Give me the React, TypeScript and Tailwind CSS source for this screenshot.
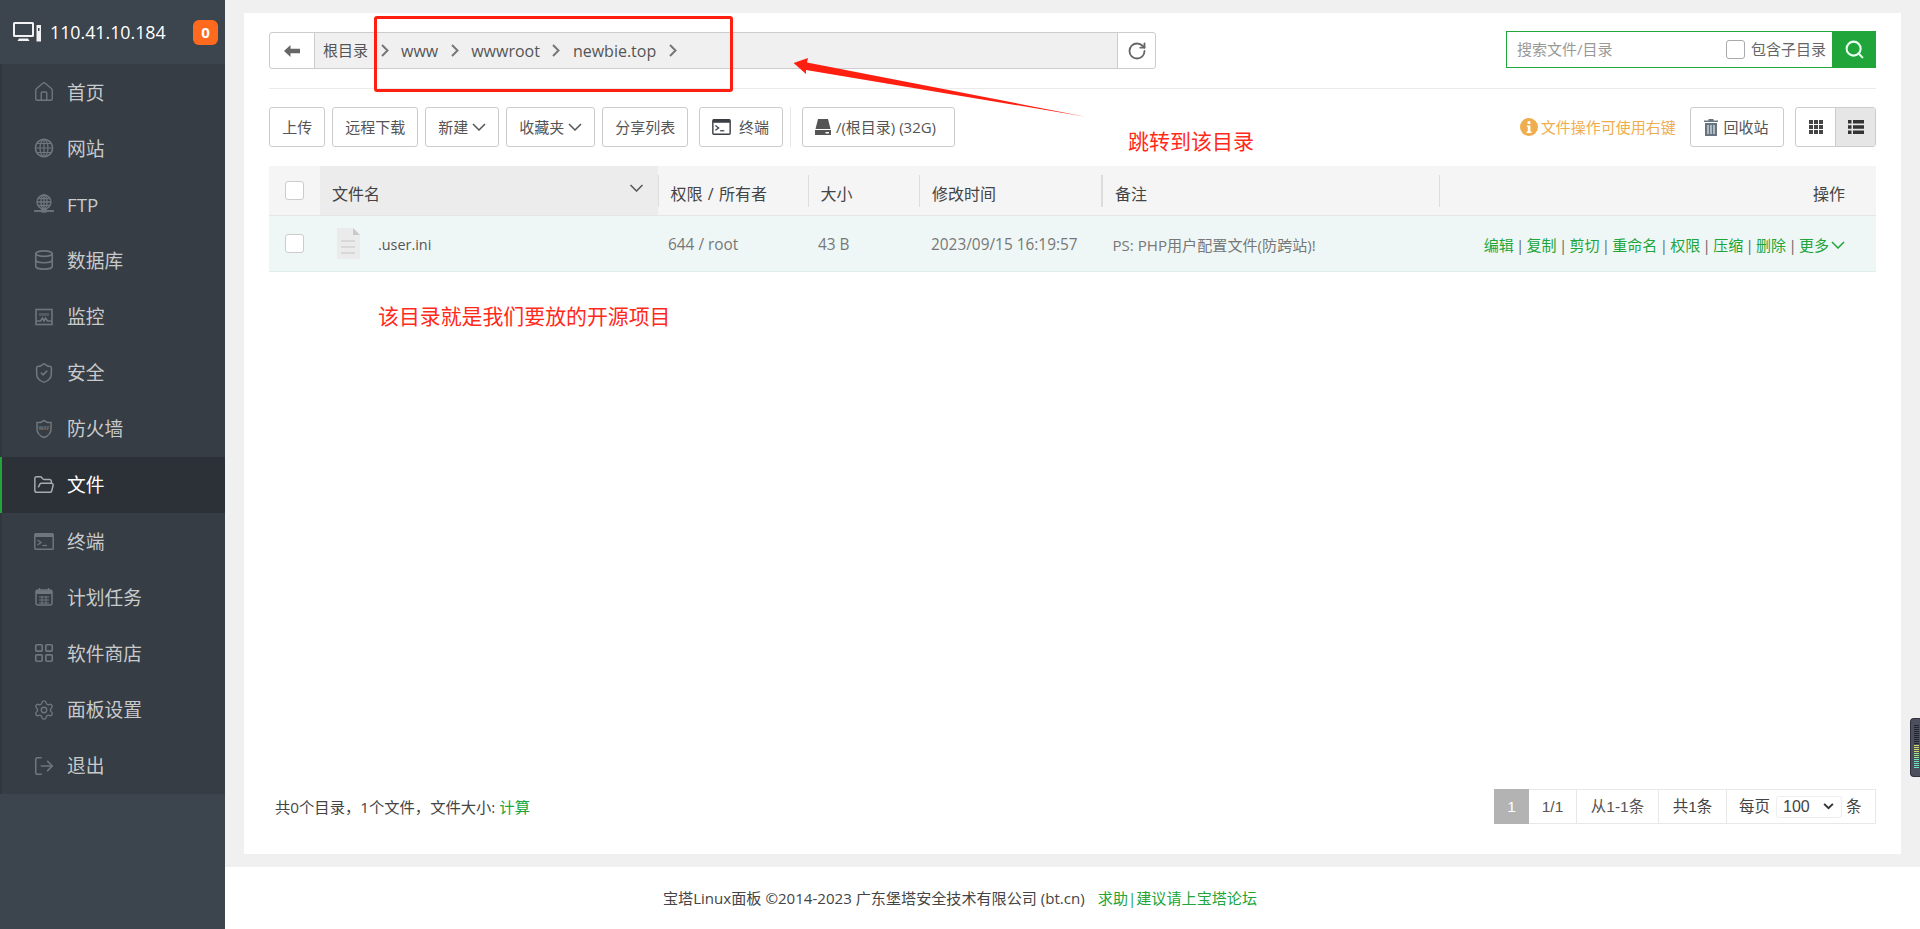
import { Database, FolderOpen, House, LayoutGrid, LogOut, RotateCw, Search, Settings, ShieldCheck } from "lucide-react";
import type { ReactNode } from "react";

const iconCls = "w-[20px] h-[20px] shrink-0";
const lucideCls = "w-[22px] h-[22px] shrink-0";

function GlobeIcon() {
  return (
    <svg viewBox="0 0 20 20" className={iconCls} fill="none" stroke="currentColor" strokeWidth="1.2">
      <circle cx="10" cy="10" r="8.6" strokeWidth="1.6" />
      <ellipse cx="10" cy="10" rx="4" ry="8.6" />
      <path d="M1.5 10h17M3 5.5h14M3 14.5h14M10 1.5v17" />
    </svg>
  );
}

function MonitorLine() {
  return (
    <svg viewBox="0 0 20 20" className={iconCls} fill="none" stroke="currentColor" strokeWidth="1.6">
      <rect x="2" y="2.5" width="16" height="15" />
      <path d="M5 6h10v3H5z" fill="currentColor" stroke="none" opacity="0.5" />
      <path d="M2.5 14h4l2-3 1.5 3 1.5-3 2 3h4" />
    </svg>
  );
}

function FtpIcon() {
  return (
    <svg viewBox="0 0 20 20" className={iconCls} fill="none" stroke="currentColor" strokeWidth="1.3">
      <circle cx="10" cy="8" r="7" />
      <ellipse cx="10" cy="8" rx="3" ry="7" />
      <path d="M3 8h14M4 4.5h12M4 11.5h12M10 1v14" />
      <path d="M0 17h20" strokeWidth="1.8" />
      <rect x="8" y="15" width="4" height="3" fill="currentColor" />
    </svg>
  );
}

function WafIcon() {
  return (
    <svg viewBox="0 0 20 20" className={iconCls} fill="none" stroke="currentColor" strokeWidth="1.5">
      <path d="M10 1.5 L6.5 3.5 H3 V10 C3 14 6 17 10 18.5 C14 17 17 14 17 10 V3.5 H13.5 Z" />
      <text x="10" y="10.5" textAnchor="middle" fontSize="5" fontWeight="700" fill="currentColor" stroke="none">
        WAF
      </text>
    </svg>
  );
}

function TermIcon({ className }: { className: string }) {
  return (
    <svg viewBox="0 0 20 17" className={className} fill="none" stroke="currentColor">
      <rect x="0.8" y="0.8" width="18.4" height="15.4" rx="1" strokeWidth="1.5" />
      <path d="M1 1h18v3H1z" fill="currentColor" stroke="none" />
      <path d="M3.5 7l3.5 2.5L3.5 12" strokeWidth="1.3" />
      <path d="M8.5 12.5H13" strokeWidth="1.3" />
    </svg>
  );
}

function CalendarIcon() {
  return (
    <svg viewBox="0 0 20 20" className={iconCls} fill="none" stroke="currentColor" strokeWidth="1.5">
      <rect x="2" y="3" width="16" height="15" rx="2" />
      <path d="M2 3.5h16v3.5H2z" fill="currentColor" stroke="none" />
      <path d="M5.5 1v3M14.5 1v3" />
      <path d="M5 10h10M5 13h10M5 16h10M8 9v8M12 9v8" strokeWidth="1" />
    </svg>
  );
}

const menu: { label: string; icon: ReactNode; active?: boolean }[] = [
  { label: "首页", icon: <House className={lucideCls} strokeWidth={1.5} /> },
  { label: "网站", icon: <GlobeIcon /> },
  { label: "FTP", icon: <FtpIcon /> },
  { label: "数据库", icon: <Database className={lucideCls} strokeWidth={1.8} /> },
  { label: "监控", icon: <MonitorLine /> },
  { label: "安全", icon: <ShieldCheck className={lucideCls} strokeWidth={1.7} /> },
  { label: "防火墙", icon: <WafIcon /> },
  { label: "文件", icon: <FolderOpen className={lucideCls} strokeWidth={1.6} />, active: true },
  { label: "终端", icon: <TermIcon className="w-[20px] h-[17px] shrink-0" /> },
  { label: "计划任务", icon: <CalendarIcon /> },
  { label: "软件商店", icon: <LayoutGrid className={lucideCls} strokeWidth={1.8} /> },
  { label: "面板设置", icon: <Settings className={lucideCls} strokeWidth={1.5} /> },
  { label: "退出", icon: <LogOut className={lucideCls} strokeWidth={1.7} /> },
];

function Sidebar() {
  return (
    <aside className="w-[225px] shrink-0 bg-[#3c444d] flex flex-col">
      <div className="h-[64px] flex items-center pl-[13px] text-white">
        <svg viewBox="0 0 28 20" className="w-[28px] h-[20px] shrink-0" fill="#f2f2f2">
          <path d="M0 1.5A1.5 1.5 0 0 1 1.5 0h18A1.5 1.5 0 0 1 21 1.5v12a1.5 1.5 0 0 1-1.5 1.5h-18A1.5 1.5 0 0 1 0 13.5zM2 2v11h17V2z" fillRule="evenodd" />
          <path d="M6 16.5h9l1.5 2.5h-12z" />
          <path d="M23.5 3H28v16.5h-4.5zM25 6v3h1.5V6z" fillRule="evenodd" />
        </svg>
        <span className="ml-[9px] text-[17.8px] whitespace-nowrap">110.41.10.184</span>
        <span className="ml-auto mr-[7px] w-[25px] h-[25px] rounded-[6px] bg-[#ff6a1f] flex items-center justify-center text-[15px] font-bold">0</span>
      </div>
      <nav className="bg-[#363d44] border-l-2 border-[#31373d]">
        {menu.map((m) => (
          <div
            key={m.label}
            className={
              m.active
                ? "h-[56.15px] flex items-center -ml-[2px] border-l-2 border-[#20a53a] bg-[#2c3138] text-white"
                : "h-[56.15px] flex items-center text-[#c8cacc]"
            }
          >
            <span className={m.active ? "w-[20px] ml-[32px] flex justify-center text-[#a8abae]" : "w-[20px] ml-[32px] flex justify-center text-[#71767c]"}>{m.icon}</span>
            <span className="ml-[13px] pt-[1px] text-[18.75px]">{m.label}</span>
          </div>
        ))}
      </nav>
    </aside>
  );
}

function Chev() {
  return (
    <svg viewBox="0 0 8 13" className="w-[8px] h-[13px] shrink-0" fill="none" stroke="#777" strokeWidth="2">
      <path d="M1 1l5.5 5.5L1 12" />
    </svg>
  );
}

function Down({ className = "w-[14px] h-[8px]" }: { className?: string }) {
  return (
    <svg viewBox="0 0 14 8" className={className} fill="none" stroke="currentColor" strokeWidth="1.5">
      <path d="M1 1l6 6 6-6" />
    </svg>
  );
}

function TopRow() {
  return (
    <div className="flex justify-between items-start pt-[18px]">
      <div className="w-[887px] h-[37px] mt-[1px] flex border border-[#ccc] rounded-[3px] text-[#555]">
        <div className="w-[44px] flex items-center justify-center">
          <svg viewBox="0 0 16 12" className="w-[16px] h-[12px]" fill="#666">
            <path d="M0 6l6.5-6v3.8H16v4.4H6.5V12z" />
          </svg>
        </div>
        <div className="flex-1 bg-[#f0f0f0] border-x border-[#ccc] flex items-center gap-[12.5px] px-[8px] text-[16px]">
          <span className="text-[15px]">根目录</span>
          <Chev />
          <span>www</span>
          <Chev />
          <span>wwwroot</span>
          <Chev />
          <span>newbie.top</span>
          <Chev />
        </div>
        <div className="w-[37px] flex items-center justify-center">
          <RotateCw className="w-[20px] h-[20px] text-[#666]" strokeWidth={2.2} />
        </div>
      </div>
      <div className="w-[370px] h-[37px] flex border border-[#20a53a] text-[15px]">
        <span className="ml-[10px] text-[#999] self-center">搜索文件/目录</span>
        <span className="ml-auto w-[19px] h-[19px] self-center rounded-[3px] border border-[#aaa] bg-white" />
        <span className="ml-[6px] mr-[6px] text-[#666] self-center">包含子目录</span>
        <div className="w-[44px] -mr-px -my-px bg-[#20a53a] flex items-center justify-center">
          <Search className="w-[21px] h-[21px] text-[#e9fff0]" strokeWidth={2.4} />
        </div>
      </div>
    </div>
  );
}

function Btn({ children, className = "" }: { children: ReactNode; className?: string }) {
  return (
    <div className={"h-[40px] px-[12.2px] flex items-center gap-[4px] border border-[#ccc] rounded-[3px] text-[15px] text-[#555] bg-white whitespace-nowrap " + className}>
      {children}
    </div>
  );
}

function Toolbar() {
  return (
    <div className="mt-[18px] flex items-center gap-[6.6px]">
      <Btn>上传</Btn>
      <Btn>远程下载</Btn>
      <Btn>新建<Down /></Btn>
      <Btn>收藏夹<Down /></Btn>
      <Btn>分享列表</Btn>
      <Btn className="ml-[4px] gap-[8px] w-[84px]">
        <TermIcon className="w-[19px] h-[16px] text-[#3a3f45]" />
        终端
      </Btn>
      <span className="mr-[4.6px] w-px h-[40px] bg-[#e8e8e8]" />
      <Btn className="gap-[5px] w-[153px]">
        <svg viewBox="0 0 16 16" className="w-[16px] h-[16px] shrink-0" fill="#555">
          <path d="M3 0h10l2.5 10h-15z" />
          <path d="M0 11h16v5H0zM10.5 13v1.5H14V13z" fillRule="evenodd" />
        </svg>
        /(根目录) (32G)
      </Btn>
      <div className="ml-auto flex items-center text-[15px] text-[#f0ad4e]">
        <svg viewBox="0 0 18 18" className="w-[18px] h-[18px]">
          <circle cx="9" cy="9" r="9" fill="#f0ad4e" />
          <rect x="7.6" y="3.2" width="2.8" height="2.8" fill="#fff" />
          <path d="M6.8 7.4h3.6v6h1.2V15H6.6v-1.6h1.2V9H6.8z" fill="#fff" />
        </svg>
        <span className="ml-[3px]">文件操作可使用右键</span>
      </div>
      <Btn className="ml-[8px] gap-[6px] w-[94px]">
        <svg viewBox="0 0 14 17" className="w-[14px] h-[17px] shrink-0" fill="#667380">
          <path d="M4.5 1.5V0h5v1.5H14V3H0V1.5z" />
          <path d="M1 4h12v13H1zM3.5 6v9h1V6zm3 0v9h1V6zm3 0v9h1V6z" fillRule="evenodd" />
        </svg>
        回收站
      </Btn>
      <div className="ml-[4px] w-[81px] h-[40px] flex border border-[#ccc] rounded-[3px]">
        <div className="w-[39px] flex items-center justify-center">
          <svg viewBox="0 0 14 14" className="w-[14px] h-[14px]" fill="#444">
            <path d="M0 0h4v4H0zM5 0h4v4H5zM10 0h4v4h-4zM0 5h4v4H0zM5 5h4v4H5zM10 5h4v4h-4zM0 10h4v4H0zM5 10h4v4H5zM10 10h4v4h-4z" />
          </svg>
        </div>
        <div className="flex-1 bg-[#e6e6e6] border-l border-[#ccc] flex items-center justify-center">
          <svg viewBox="0 0 16 14" className="w-[16px] h-[14px]" fill="#333">
            <path d="M0 0h3.5v3.5H0zM5 0h11v3.5H5zM0 5.2h3.5v3.5H0zM5 5.2h11v3.5H5zM0 10.5h3.5V14H0zM5 10.5h11V14H5z" />
          </svg>
        </div>
      </div>
    </div>
  );
}

function Check() {
  return <span className="block w-[19px] h-[19px] rounded-[3px] border border-[#ccc] bg-white" />;
}

function HeadCell({ label, thick }: { label: string; thick?: boolean }) {
  return (
    <div className="flex items-center">
      <span className={thick ? "w-[2px] h-[32px] bg-[#ddd]" : "w-px h-[32px] bg-[#ddd]"} />
      <span className="ml-[12px] pt-[6px] whitespace-nowrap [word-spacing:1.2px]">{label}</span>
    </div>
  );
}

const actions = ["编辑", "复制", "剪切", "重命名", "权限", "压缩", "删除"];

function FileTable() {
  return (
    <div className="mt-[19px]">
      <div className="h-[50px] grid grid-cols-[51px_337.5px_150px_111.5px_182px_338px_1fr] bg-[#f5f5f5] border-b border-[#e6e6e6] text-[16px] text-[#444]">
        <div className="flex items-center pl-[16px]"><Check /></div>
        <div className="bg-[#ececec] flex items-center pl-[12px] pr-[14px] justify-between">
          <span className="pt-[6px]">文件名</span>
          <Down className="w-[15px] h-[8px] -mt-[6px] text-[#555]" />
        </div>
        <HeadCell label="权限 / 所有者" />
        <HeadCell label="大小" />
        <HeadCell label="修改时间" />
        <HeadCell label="备注" thick />
        <div className="flex items-center">
          <span className="w-px h-[32px] bg-[#ddd]" />
          <span className="ml-auto mr-[31px] pt-[6px]">操作</span>
        </div>
      </div>
      <div className="h-[56px] grid grid-cols-[51px_337.5px_150px_111.5px_182px_338px_1fr] items-center bg-[#eff7f6] border-b border-[#dfeeea] text-[15.4px] text-[#777]">
        <div className="pl-[16px]"><Check /></div>
        <div className="flex items-center pl-[17px]">
          <svg viewBox="0 0 23 31" className="w-[23px] h-[31px] shrink-0">
            <path d="M0 0h16l7 7v24H0z" fill="#ebebeb" />
            <path d="M16 0l7 7h-7z" fill="#c9c9c9" />
            <path d="M4 12h14v2H4zM4 18h14v2H4zM4 24h14v2H4z" fill="#d8d8d8" />
          </svg>
          <span className="ml-[18px] pt-[3px] text-[14.4px] text-[#555]">.user.ini</span>
        </div>
        <div className="pl-[10.5px] pt-[3px]">644 / root</div>
        <div className="pl-[10.5px] pt-[3px]">43 B</div>
        <div className="pl-[12px] pt-[3px]">2023/09/15 16:19:57</div>
        <div className="pl-[11.5px] pt-[3px] text-[15.1px] whitespace-nowrap">PS: PHP用户配置文件(防跨站)!</div>
        <div className="flex justify-end items-center pr-[31px] pt-[3px] text-[15px] text-[#20a53a] whitespace-nowrap">
          {actions.map((a) => (
            <span key={a} className="flex">
              {a}
              <span className="w-[12.9px] text-center text-[#666]">|</span>
            </span>
          ))}
          更多
          <Down className="ml-[2px] w-[14px] h-[8px]" />
        </div>
      </div>
    </div>
  );
}

function Pagination() {
  return (
    <div className="flex h-[35px] border border-[#e8e8e8] text-[15.5px] text-[#555] font-['Liberation_Sans','Noto_Sans_CJK_SC',sans-serif]">
      <span className="-my-px -ml-px w-[35px] bg-[#b3b3b3] text-white flex items-center justify-center">1</span>
      <span className="w-[48px] border-r border-[#e8e8e8] flex items-center justify-center">1/1</span>
      <span className="w-[82px] border-r border-[#e8e8e8] flex items-center justify-center">从1-1条</span>
      <span className="w-[68px] border-r border-[#e8e8e8] flex items-center justify-center text-[#444]">共1条</span>
      <span className="w-[148px] flex items-center pl-[12px] text-[#444]">
        <span className="w-[32px] whitespace-nowrap">每页</span>
        <span className="ml-[5px] w-[66px] h-[22px] rounded-[3px] border border-[#eee] flex items-center pl-[6px] pr-[7px] justify-between text-[16px]">
          100
          <svg viewBox="0 0 12 8" className="w-[11px] h-[7px]" fill="none" stroke="#333" strokeWidth="2.2">
            <path d="M1 1l5 5 5-5" />
          </svg>
        </span>
        <span className="ml-[4px]">条</span>
      </span>
    </div>
  );
}

const meter = ["d", "d", "d", "d", "d", "d", "d", "d", "d", "d", "y", "y", "y", "y", "g", "g", "g", "t", "t", "t", "t", "t"];

function SideWidget() {
  return (
    <div className="absolute right-0 top-[718px] w-[10px] h-[59px] rounded-l-[4px] bg-[#4b4f5e] border border-[#2f323c] border-r-0 pl-[3px] pt-[6px] flex flex-col gap-[1px]">
      {meter.map((c, i) => (
        <span
          key={i}
          className={
            c === "d"
              ? "h-[1px] w-[5px] bg-[#23262e]"
              : c === "y"
                ? "h-[1px] w-[5px] bg-[#c9d86a]"
                : c === "g"
                  ? "h-[1px] w-[5px] bg-[#9fe08a]"
                  : "h-[1px] w-[5px] bg-[#6fe0b8]"
          }
        />
      ))}
    </div>
  );
}

export default function App() {
  return (
    <div className="relative w-[1920px] h-[929px] overflow-hidden flex bg-white font-['Open_Sans','Noto_Sans_CJK_SC',sans-serif]">
      <Sidebar />
      <main className="flex-1 min-w-0 flex flex-col">
        <div className="h-[867px] bg-[#f0f0f0] pt-[13px] pb-[13px] pl-[19px] pr-[19px]">
          <div className="h-full bg-white pl-[25px] pr-[25px] flex flex-col">
            <TopRow />
            <div className="mt-[19px] h-px bg-[#eaeaea]" />
            <Toolbar />
            <FileTable />
            <div className="mt-auto mb-[30px] flex justify-between items-center">
              <div className="ml-[6px] pt-[2px] text-[15.3px] text-[#444]">
                共0个目录，1个文件，文件大小: <span className="text-[#20a53a]">计算</span>
              </div>
              <Pagination />
            </div>
          </div>
        </div>
        <footer className="flex-1 flex items-center justify-center text-[15.1px] text-[#444] pr-[225px]">
          宝塔Linux面板 ©2014-2023 广东堡塔安全技术有限公司 (bt.cn)
          <span className="ml-[13px] text-[#20a53a]">求助|建议请上宝塔论坛</span>
        </footer>
      </main>

      {/* annotations drawn on top of the screenshot */}
      <div className="absolute left-[374px] top-[16px] w-[359px] h-[76px] border-[3px] border-[#ff1f10] rounded-[3px]" />
      <svg className="absolute left-[780px] top-[50px] w-[320px] h-[80px]" viewBox="780 50 320 80">
        <path d="M793.6 63 L808 58 L807 62.5 L1085.7 116.7 L806 70 L806 74 Z" fill="#ff1f10" />
      </svg>
      <div className="absolute left-[1128px] top-[127px] text-[21px] leading-[28px] text-[#ff2a1a]">跳转到该目录</div>
      <div className="absolute left-[378px] top-[302px] text-[20.9px] leading-[28px] text-[#ff2a1a]">该目录就是我们要放的开源项目</div>
      <SideWidget />
    </div>
  );
}
